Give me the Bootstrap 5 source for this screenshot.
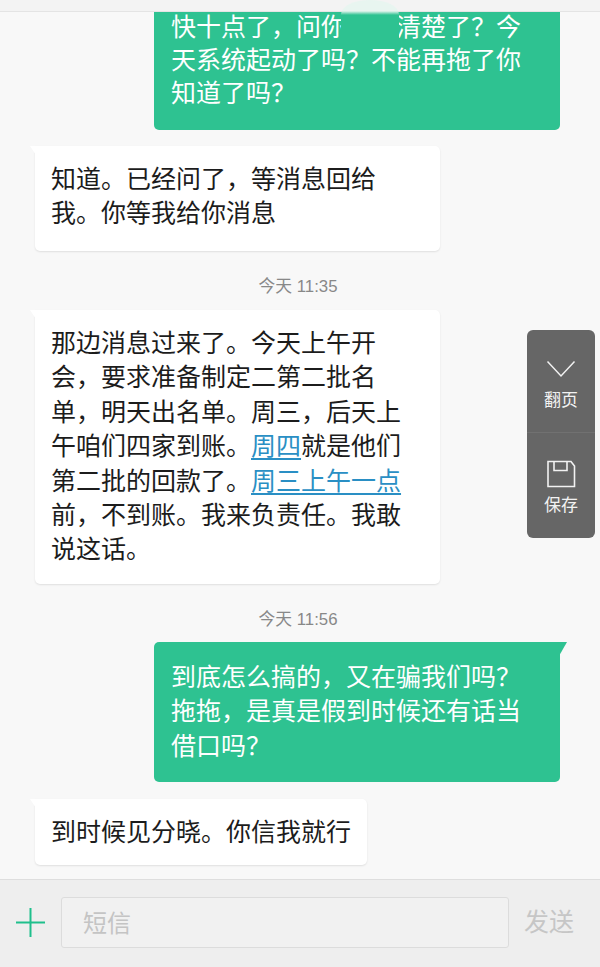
<!DOCTYPE html>
<html lang="zh">
<head>
<meta charset="utf-8">
<title>短信</title>
<link href="https://cdn.jsdelivr.net/npm/bootstrap@5.3.0/dist/css/bootstrap.min.css" rel="stylesheet">
<style>
html,body{height:967px;overflow:hidden}
body{background:#f8f8f8;font-family:"Noto Sans CJK SC","Liberation Sans",sans-serif;color:#222}
.screen{height:967px;width:600px;position:relative}
.topstrip{height:12px;background:#f3f3f3;border-bottom:1px solid #e4e4e4;flex:none;position:relative;z-index:1}
.chat{flex:1 1 auto;min-height:0}
.bub{font-size:25px;line-height:34.4px;position:relative;border-radius:5px;flex:none}
.bub-me{width:406px;margin-right:40px;margin-left:auto;background:#2ec291;color:#fff;padding:16px 17px 0}
.bub-first{padding-top:0;border-radius:0 0 5px 5px;height:118px;line-height:33.4px}
.firstline{display:block;line-height:26px;height:26px;margin-bottom:4px}
.bub-you{margin-left:35px;background:#fff;color:#1c1c1c;padding:14px 16px 0;box-shadow:0 1px 2px rgba(0,0,0,.1)}
.tail-l{border-top-left-radius:0}
.tail-r{border-top-right-radius:0}
.tail-l::before{content:"";position:absolute;left:-5px;top:0;width:6px;height:9px;background:#fff;clip-path:polygon(0 0,100% 0,100% 100%)}
.tail-r::after{content:"";position:absolute;right:-7px;top:0;width:8px;height:14px;background:#2ec291;clip-path:polygon(0 0,100% 0,0 100%)}
.g2{height:140px}
.w1{width:405px;margin-top:16px;height:105px}
.w2{width:405px;height:274px}
.w3{width:332px;margin-top:17px;height:66px}
.stamp{font-size:16.8px;color:#888;text-align:center;line-height:24px;padding-right:4px;font-family:"Liberation Sans","Noto Sans CJK SC",sans-serif;flex:none}
.st1{margin:24px 0 11px}
.st2{margin:24px 0 10px}
.gap-hide{display:inline-block;width:50px}
.smudge{position:absolute;left:341px;top:0;width:58px;height:40px;background:linear-gradient(#e8f5f0 0,#e8f5f0 11px,#2ec291 15px);border-radius:50% 50% 0 0/35% 35% 0 0;z-index:2}
.lnk{color:#2a8fc4;text-decoration:underline;text-underline-offset:3px}
.composer{height:88px;flex:none;background:#eeeeee;border-top:1px solid #dedede;padding:17px 0 19px 15px}
.addicon{width:31px;height:31px;flex:none}
.smsbox{width:448px;height:51px;margin-left:15px;background:#f1f1f1;border:1px solid #dcdcdc;border-radius:3px;font-size:24px;color:#c4c4c4;padding-left:21px;line-height:47px}
.sendtxt{font-size:25px;color:#c6c6c6;margin-left:15px;line-height:1;margin-top:-4px}
.sidepanel{position:absolute;left:527px;top:330px;width:68px;height:208px;background:#666;border-radius:6px;color:#f2f2f2;font-size:17px}
.pane-top{height:103px;padding-top:30px;border-bottom:1px solid #717171}
.pane-bot{padding-top:27px}
.pane-ic{display:block;margin:0 auto}
.pane-lb{line-height:22px}
.lb1{margin-top:10px}
.lb2{margin-top:5px}
</style>
</head>
<body>
<div class="screen d-flex flex-column">
  <div class="topstrip"></div>
  <div class="chat d-flex flex-column">
    <div class="bub bub-me bub-first"><span class="firstline">快十点了&#xFF0C;问你<span class="gap-hide"></span>清楚了&#xFF1F;今</span>天系统起动了吗&#xFF1F;不能再拖了你<br>知道了吗&#xFF1F;</div>
    <div class="bub bub-you tail-l w1">知道。已经问了&#xFF0C;等消息回给<br>我。你等我给你消息</div>
    <div class="stamp st1">今天 11:35</div>
    <div class="bub bub-you tail-l w2">那边消息过来了。今天上午开<br>会&#xFF0C;要求准备制定二第二批名<br>单&#xFF0C;明天出名单。周三&#xFF0C;后天上<br>午咱们四家到账。<span class="lnk">周四</span>就是他们<br>第二批的回款了。<span class="lnk">周三上午一点</span><br>前&#xFF0C;不到账。我来负责任。我敢<br>说这话。</div>
    <div class="stamp st2">今天 11:56</div>
    <div class="bub bub-me tail-r g2">到底怎么搞的&#xFF0C;又在骗我们吗&#xFF1F;<br>拖拖&#xFF0C;是真是假到时候还有话当<br>借口吗&#xFF1F;</div>
    <div class="bub bub-you tail-l w3">到时候见分晓。你信我就行</div>
  </div>
  <div class="composer d-flex align-items-center">
    <svg class="addicon" viewBox="0 0 31 31"><path d="M15.5 1V30M1 15.5H30" stroke="#1fbf8c" stroke-width="2" fill="none"/></svg>
    <div class="smsbox">短信</div>
    <div class="sendtxt">发送</div>
  </div>
  <div class="smudge"></div>
  <div class="sidepanel text-center">
    <div class="pane-top">
      <svg class="pane-ic" width="30" height="18" viewBox="0 0 30 18"><path d="M1.5 1.5 15 16 28.5 1.5" stroke="#f2f2f2" stroke-width="1.5" fill="none"/></svg>
      <div class="pane-lb lb1">翻页</div>
    </div>
    <div class="pane-bot">
      <svg class="pane-ic" width="30" height="28" viewBox="0 0 30 28"><path d="M2 1.5H25L28.5 6V26.5H2ZM8 1.5V10.5H21V1.5" stroke="#f2f2f2" stroke-width="1.6" fill="none"/></svg>
      <div class="pane-lb lb2">保存</div>
    </div>
  </div>
</div>
<script src="https://cdn.jsdelivr.net/npm/bootstrap@5.3.0/dist/js/bootstrap.bundle.min.js"></script>
</body>
</html>
